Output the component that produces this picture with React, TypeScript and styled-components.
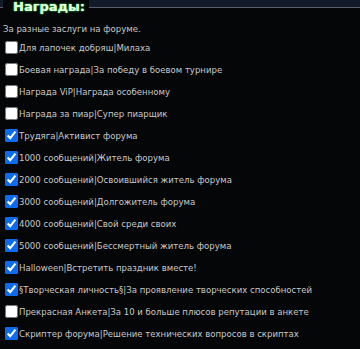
import styled, { createGlobalStyle } from "styled-components"

const Global = createGlobalStyle`
  html, body {
    margin: 0;
    padding: 0;
    background: #050608;
  }
  body {
    font-family: "DejaVu Sans Condensed", "DejaVu Sans", Verdana, sans-serif;
  }
`

type Award = {
  title: string
  checked: boolean
}

const awards: Award[] = [
  { title: "Для лапочек добряш|Милаха", checked: false },
  { title: "Боевая награда|За победу в боевом турнире", checked: false },
  { title: "Награда ViP|Награда особенному", checked: false },
  { title: "Награда за пиар|Супер пиарщик", checked: false },
  { title: "Трудяга|Активист форума", checked: true },
  { title: "1000 сообщений|Житель форума", checked: true },
  { title: "2000 сообщений|Освоившийся житель форума", checked: true },
  { title: "3000 сообщений|Долгожитель форума", checked: true },
  { title: "4000 сообщений|Свой среди своих", checked: true },
  { title: "5000 сообщений|Бессмертный житель форума", checked: true },
  { title: "Halloween|Встретить праздник вместе!", checked: true },
  { title: "§Творческая личность§|За проявление творческих способностей", checked: true },
  { title: "Прекрасная Анкета|За 10 и больше плюсов репутации в анкете", checked: false },
  { title: "Скриптер форума|Решение технических вопросов в скриптах", checked: true },
]

export default function App() {
  return (
    <Page>
      <Global />
      <TopBand />
      <Fieldset>
        <Legend>Награды:</Legend>
        <Hint>За разные заслуги на форуме.</Hint>
        <List>
          {awards.map(a => (
            <Row key={a.title}>
              <Check type="checkbox" defaultChecked={a.checked} />
              <Label>{a.title}</Label>
            </Row>
          ))}
        </List>
      </Fieldset>
    </Page>
  )
}

const Page = styled.div`
  width: 360px;
  height: 349px;
  overflow: hidden;
  background: #050608;
`

const TopBand = styled.div`
  height: 7px;
  background: #121b2a;
`

const Fieldset = styled.fieldset`
  margin: 0;
  margin-top: -7px;
  padding: 0 0 0 3px;
  border: none;
  border-top: 1px solid #5a5e66;
  min-width: 0;
`

const Legend = styled.legend`
  margin-left: 0;
  padding: 0 4px 0 10px;
  background: #050608;
  color: #e8ffe0;
  font-family: "DejaVu Sans", Verdana, sans-serif;
  font-size: 13px;
  font-weight: bold;
  line-height: 14px;
  text-shadow: 0 0 2px #27d64a, 0 0 1px #3bff7a;
`

const Hint = styled.div`
  margin-top: 8px;
  color: #c9c9c9;
  font-size: 9.5px;
  line-height: 14px;
`

const List = styled.div`
  display: flex;
  flex-direction: column;
`

const Row = styled.label`
  display: flex;
  align-items: center;
  height: 22px;
`

const Check = styled.input`
  flex: none;
  width: 13px;
  height: 13px;
  margin: 0 1px 0 2px;
  accent-color: #0b6cf0;
`

const Label = styled.span`
  color: #c9c9c9;
  font-size: 9.5px;
  white-space: nowrap;
`
